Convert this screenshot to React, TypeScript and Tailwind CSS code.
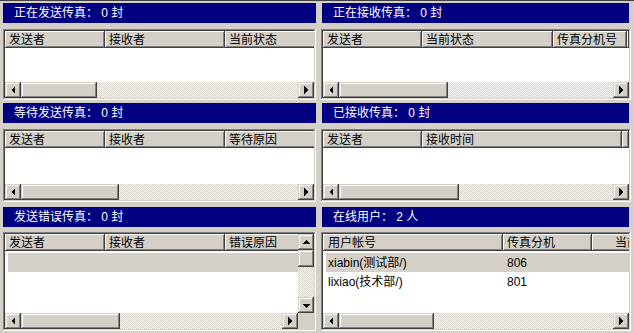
type Col = { label: string; w: string; pad?: string }

const LEFT_COLS_1: Col[] = [
  { label: '发送者', w: 'w-[100px]' },
  { label: '接收者', w: 'w-[120px]' },
  { label: '当前状态', w: 'w-[110px]' },
]
const RIGHT_COLS_1: Col[] = [
  { label: '发送者', w: 'w-[99px]' },
  { label: '当前状态', w: 'w-[131px]' },
  { label: '传真分机号', w: 'w-[74px]' },
]
const LEFT_COLS_2: Col[] = [
  { label: '发送者', w: 'w-[100px]' },
  { label: '接收者', w: 'w-[120px]' },
  { label: '等待原因', w: 'w-[110px]' },
]
const RIGHT_COLS_2: Col[] = [
  { label: '发送者', w: 'w-[99px]' },
  { label: '接收时间', w: 'w-[200px]' },
]
const LEFT_COLS_3: Col[] = [
  { label: '发送者', w: 'w-[100px]' },
  { label: '接收者', w: 'w-[120px]' },
  { label: '错误原因', w: 'w-[100px]' },
]
const RIGHT_COLS_3: Col[] = [
  { label: '用户帐号', w: 'w-[180px]', pad: 'pl-[5px]' },
  { label: '传真分机', w: 'w-[89px]' },
  { label: '当前状态', w: 'w-[80px]', pad: 'pl-[23px]' },
]

const USERS = [
  { name: 'xiabin(测试部/)', ext: '806' },
  { name: 'lixiao(技术部/)', ext: '801' },
]

function Arrow({ dir }: { dir: 'left' | 'right' | 'up' | 'down' }) {
  const pts = {
    left: '6,8 10,4 10,12',
    right: '6,4 10,8 6,12',
    up: '4,10 8,6 12,10',
    down: '4,7 12,7 8,11',
  }[dir]
  return (
    <div className="w-[16px] h-[16px] shrink-0 bg-[#d4d0c8] shadow-[inset_-1px_-1px_#404040,inset_1px_1px_#d4d0c8,inset_-2px_-2px_#808080,inset_2px_2px_#ffffff]">
      <svg width="16" height="16" viewBox="0 0 16 16" shapeRendering="crispEdges">
        <polygon points={pts} fill="#000" />
      </svg>
    </div>
  )
}

function Thumb({ className }: { className: string }) {
  return (
    <div className={`${className} shrink-0 bg-[#d4d0c8] shadow-[inset_-1px_-1px_#404040,inset_1px_1px_#d4d0c8,inset_-2px_-2px_#808080,inset_2px_2px_#ffffff]`} />
  )
}

function Track() {
  return (
    <div className="flex-1 min-w-0 min-h-0 bg-[repeating-conic-gradient(#d4d0c8_0_25%,#ffffff_0_50%)] bg-[length:2px_2px]" />
  )
}

function HScroll({ thumb }: { thumb: string }) {
  return (
    <div className="flex h-[16px] shrink-0 w-full">
      <Arrow dir="left" />
      <Thumb className={`${thumb} h-[16px]`} />
      <Track />
      <Arrow dir="right" />
    </div>
  )
}

function Header({ cols }: { cols: Col[] }) {
  return (
    <div className="flex h-[17px] shrink-0 overflow-hidden">
      {cols.map((c) => (
        <div
          key={c.label}
          className={`${c.w} ${c.pad ?? 'pl-[4px]'} shrink-0 h-full flex items-center whitespace-nowrap overflow-hidden bg-[#d4d0c8] shadow-[inset_-1px_-1px_#404040,inset_1px_1px_#ffffff,inset_-2px_-2px_#808080]`}
        >
          {c.label}
        </div>
      ))}
      <div className="flex-1 min-w-0 h-full bg-[#d4d0c8] shadow-[inset_-1px_-1px_#404040,inset_1px_1px_#ffffff,inset_-2px_-2px_#808080]" />
    </div>
  )
}

function Title({ text, className = '' }: { text: string; className?: string }) {
  return (
    <div className={`h-[20px] shrink-0 bg-[#000080] text-white flex items-center pl-[11px] whitespace-pre ${className}`}>
      {text}
    </div>
  )
}

function ListBox({ h, children }: { h: string; children: React.ReactNode }) {
  return (
    <div className={`${h} shrink-0 p-[2px] bg-white flex flex-col shadow-[inset_-1px_-1px_#ffffff,inset_1px_1px_#808080,inset_-2px_-2px_#d4d0c8,inset_2px_2px_#404040]`}>
      {children}
    </div>
  )
}

function SimpleList({ h, cols, thumb }: { h: string; cols: Col[]; thumb: string }) {
  return (
    <ListBox h={h}>
      <Header cols={cols} />
      <div className="flex-1 bg-white" />
      <HScroll thumb={thumb} />
    </ListBox>
  )
}

export default function App() {
  return (
    <div className="w-[634px] h-[333px] overflow-hidden bg-[#d4d0c8] border-t border-[#404040] flex text-[12px] leading-[14px] text-black font-['Liberation_Sans','Noto_Sans_CJK_SC',sans-serif]">
      {/* left column */}
      <div className="w-[316px] shrink-0 pl-[3px] pt-[2px] flex flex-col">
        <Title text="正在发送传真： 0 封" />
        <div className="mt-[6px]">
          <SimpleList h="h-[71px]" cols={LEFT_COLS_1} thumb="w-[76px]" />
        </div>
        <Title text="等待发送传真： 0 封" className="mt-[3px]" />
        <div className="mt-[6px]">
          <SimpleList h="h-[73px]" cols={LEFT_COLS_2} thumb="w-[98px]" />
        </div>
        <Title text="发送错误传真： 0 封" className="mt-[5px]" />
        <div className="mt-[5px]">
          <ListBox h="h-[99px]">
            <div className="flex flex-1 min-h-0">
              <div className="flex-1 min-w-0 flex flex-col">
                <Header cols={LEFT_COLS_3} />
                <div className="flex-1 bg-white pt-[2px]">
                  <div className="ml-[3px] h-[19px] bg-[#d4d0c8]" />
                </div>
              </div>
              <div className="w-[16px] shrink-0 flex flex-col">
                <Arrow dir="up" />
                <Thumb className="w-[16px] h-[17px]" />
                <Track />
                <Arrow dir="down" />
              </div>
            </div>
            <div className="flex shrink-0">
              <div className="flex-1 min-w-0">
                <HScroll thumb="w-[99px]" />
              </div>
              <div className="w-[16px] h-[16px] shrink-0 bg-[#d4d0c8]" />
            </div>
          </ListBox>
        </div>
      </div>

      {/* splitter */}
      <div className="w-[5px] shrink-0" />

      {/* right column */}
      <div className="w-[310px] shrink-0 pt-[2px] flex flex-col">
        <Title text="正在接收传真： 0 封" className="ml-[1px] mr-[2px]" />
        <div className="mt-[6px]">
          <SimpleList h="h-[71px]" cols={RIGHT_COLS_1} thumb="w-[109px]" />
        </div>
        <Title text="已接收传真： 0 封" className="mt-[3px] ml-[1px] mr-[2px]" />
        <div className="mt-[6px]">
          <SimpleList h="h-[73px]" cols={RIGHT_COLS_2} thumb="w-[120px]" />
        </div>
        <Title text="在线用户： 2 人" className="mt-[5px] ml-[1px] mr-[2px]" />
        <div className="mt-[5px]">
          <ListBox h="h-[99px]">
            <Header cols={RIGHT_COLS_3} />
            <div className="flex-1 bg-white pt-[2px]">
              {USERS.map((u, i) => (
                <div key={u.name} className={`ml-[3px] h-[19px] flex items-center whitespace-nowrap ${i === 0 ? 'bg-[#d4d0c8]' : ''}`}>
                  <div className="w-[177px] shrink-0 pl-[2px]">{u.name}</div>
                  <div className="pl-[4px]">{u.ext}</div>
                </div>
              ))}
            </div>
            <HScroll thumb="w-[95px]" />
          </ListBox>
        </div>
      </div>
    </div>
  )
}
